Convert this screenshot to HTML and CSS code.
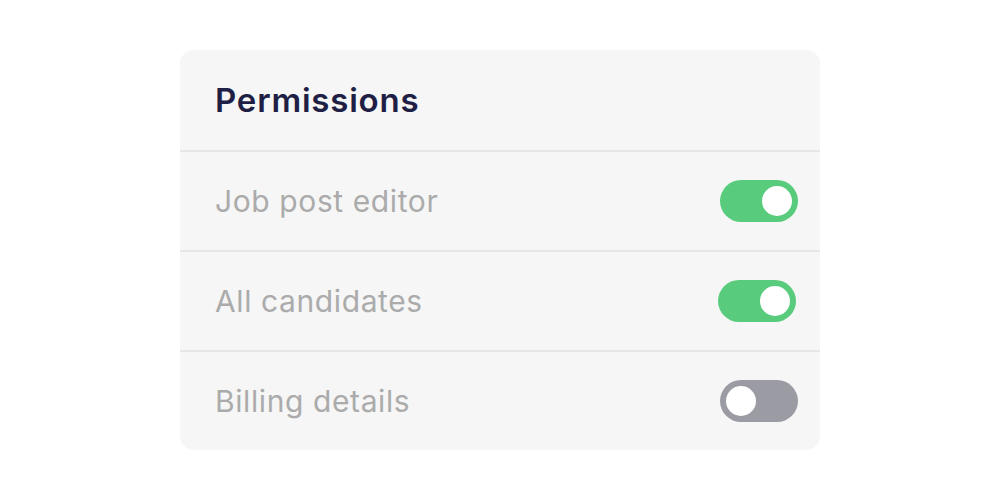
FILE: index.html
```html
<!DOCTYPE html>
<html lang="en">
<head>
	<meta charset="UTF-8">
	<title>Permissions</title>
	<link rel="stylesheet" href="styles.css">
</head>
<body>
	<section class="card">
		<h1 class="card-title">Permissions</h1>
		<div class="row">
			<span class="row-label">Job post editor</span>
			<span class="toggle on"><span class="knob"></span></span>
		</div>
		<div class="row">
			<span class="row-label">All candidates</span>
			<span class="toggle on shift"><span class="knob"></span></span>
		</div>
		<div class="row">
			<span class="row-label">Billing details</span>
			<span class="toggle"><span class="knob"></span></span>
		</div>
	</section>
</body>
</html>
```

FILE: styles.css
```css
* {
	box-sizing: border-box;
}
body {
	margin: 0;
	background: #fff;
	font-family: Inter, "Noto Sans", sans-serif;
}
.card {
	width: 640px;
	margin: 50px auto 0;
	background: #f6f6f6;
	border-radius: 14px;
	overflow: hidden;
}
.card-title {
	margin: 0;
	height: 102px;
	padding: 0 35px;
	display: flex;
	align-items: center;
	font-size: 33px;
	font-weight: 600;
	letter-spacing: 0.8px;
	color: #1f1f45;
	border-bottom: 2px solid #e6e6e6;
}
.row {
	height: 100px;
	padding: 0 22px 0 35px;
	display: flex;
	align-items: center;
	justify-content: space-between;
	border-bottom: 2px solid #e6e6e6;
}
.row:last-child {
	border-bottom: 0;
	height: 98px;
}
.row-label {
	font-size: 30px;
	letter-spacing: 0.6px;
	color: #ababab;
}
.toggle {
	width: 78px;
	height: 42px;
	border-radius: 21px;
	background: #9b9ba3;
	padding: 6px;
	display: flex;
}
.toggle.on {
	background: #58cb7c;
	justify-content: flex-end;
}
.toggle.shift {
	margin-right: 2px;
}
.knob {
	width: 30px;
	height: 30px;
	border-radius: 50%;
	background: #fff;
}
```
